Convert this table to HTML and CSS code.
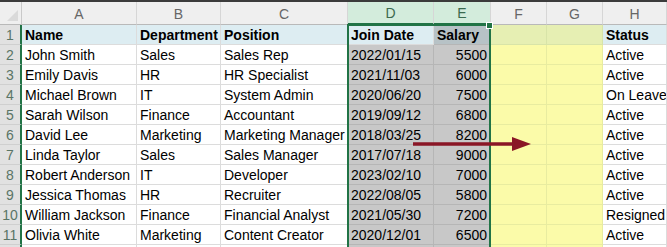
FILE: index.html
```html
<!DOCTYPE html>
<html>
<head>
<meta charset="utf-8">
<link rel="stylesheet" href="styles.css">
</head>
<body>
<div class="sheet">
  <div class="grid">
    <div class="ch corner"><span class="tri"></span></div>
    <div class="ch">A</div><div class="ch">B</div><div class="ch">C</div>
    <div class="ch sel">D</div><div class="ch sel">E</div>
    <div class="ch">F</div><div class="ch">G</div><div class="ch">H</div>

    <div class="rh">1</div>
    <div class="c hd b">Name</div><div class="c hd b">Department</div><div class="c hd b">Position</div>
    <div class="c hd b">Join Date</div><div class="c hd b shade">Salary</div>
    <div class="c yh"></div><div class="c yh"></div><div class="c hd b">Status</div>

    <div class="rh">2</div>
    <div class="c">John Smith</div><div class="c">Sales</div><div class="c">Sales Rep</div>
    <div class="c shade">2022/01/15</div><div class="c shade num">5500</div>
    <div class="c y"></div><div class="c y"></div><div class="c">Active</div>

    <div class="rh">3</div>
    <div class="c">Emily Davis</div><div class="c">HR</div><div class="c">HR Specialist</div>
    <div class="c shade">2021/11/03</div><div class="c shade num">6000</div>
    <div class="c y"></div><div class="c y"></div><div class="c">Active</div>

    <div class="rh">4</div>
    <div class="c">Michael Brown</div><div class="c">IT</div><div class="c">System Admin</div>
    <div class="c shade">2020/06/20</div><div class="c shade num">7500</div>
    <div class="c y"></div><div class="c y"></div><div class="c">On Leave</div>

    <div class="rh">5</div>
    <div class="c">Sarah Wilson</div><div class="c">Finance</div><div class="c">Accountant</div>
    <div class="c shade">2019/09/12</div><div class="c shade num">6800</div>
    <div class="c y"></div><div class="c y"></div><div class="c">Active</div>

    <div class="rh">6</div>
    <div class="c">David Lee</div><div class="c">Marketing</div><div class="c">Marketing Manager</div>
    <div class="c shade">2018/03/25</div><div class="c shade num">8200</div>
    <div class="c y"></div><div class="c y"></div><div class="c">Active</div>

    <div class="rh">7</div>
    <div class="c">Linda Taylor</div><div class="c">Sales</div><div class="c">Sales Manager</div>
    <div class="c shade">2017/07/18</div><div class="c shade num">9000</div>
    <div class="c y"></div><div class="c y"></div><div class="c">Active</div>

    <div class="rh">8</div>
    <div class="c">Robert Anderson</div><div class="c">IT</div><div class="c">Developer</div>
    <div class="c shade">2023/02/10</div><div class="c shade num">7000</div>
    <div class="c y"></div><div class="c y"></div><div class="c">Active</div>

    <div class="rh">9</div>
    <div class="c">Jessica Thomas</div><div class="c">HR</div><div class="c">Recruiter</div>
    <div class="c shade">2022/08/05</div><div class="c shade num">5800</div>
    <div class="c y"></div><div class="c y"></div><div class="c">Active</div>

    <div class="rh">10</div>
    <div class="c">William Jackson</div><div class="c">Finance</div><div class="c">Financial Analyst</div>
    <div class="c shade">2021/05/30</div><div class="c shade num">7200</div>
    <div class="c y"></div><div class="c y"></div><div class="c">Resigned</div>

    <div class="rh">11</div>
    <div class="c">Olivia White</div><div class="c">Marketing</div><div class="c">Content Creator</div>
    <div class="c shade">2020/12/01</div><div class="c shade num">6500</div>
    <div class="c y"></div><div class="c y"></div><div class="c">Active</div>

    <div class="rh"></div>
    <div class="c"></div><div class="c"></div><div class="c"></div>
    <div class="c shade"></div><div class="c shade"></div>
    <div class="c y"></div><div class="c y"></div><div class="c"></div>
  </div>
  <div class="selection"><span class="handle"></span></div>
  <svg class="arrow" width="130" height="20" viewBox="0 0 130 20">
    <line x1="0" y1="10" x2="104" y2="10" stroke="#8a1626" stroke-width="3.5"/>
    <polygon points="99,3 118,10 99,17" fill="#8a1626"/>
  </svg>
</div>
</body>
</html>
```

FILE: styles.css
```css
html, body {
  margin: 0;
  padding: 0;
  background: #ffffff;
}
.sheet {
  position: relative;
  width: 667px;
  height: 247px;
  overflow: hidden;
  border-top: 2px solid #3b3b3b;
  box-sizing: border-box;
  font-family: "Liberation Sans", Arial, sans-serif;
  font-size: 14px;
  color: #000;
}
.grid {
  display: grid;
  grid-template-columns: 22px 115px 84px 127px 86px 57px 56px 56px 64px;
  grid-template-rows: 23px repeat(12, 20px);
}
.ch {
  background: #efefef;
  color: #666;
  font-size: 14px;
  display: flex;
  align-items: center;
  justify-content: center;
  border-right: 1px solid #d6d6d6;
  border-bottom: 1px solid #b9b9b9;
  box-sizing: border-box;
  padding-top: 1px;
}
.ch.corner {
  position: relative;
  border-right: 1px solid #c9c9c9;
}
.tri {
  position: absolute;
  right: 3px;
  bottom: 3px;
  width: 0;
  height: 0;
  border-left: 11px solid transparent;
  border-bottom: 11px solid #dadada;
}
.ch.sel {
  background: #d3ecdc;
  color: #3b6a4f;
  border-bottom: 2px solid #217346;
}
.rh {
  background: #e1e1e1;
  color: #5a7566;
  display: flex;
  align-items: center;
  justify-content: center;
  border-right: 2px solid #217346;
  border-bottom: 1px solid #cfcfcf;
  box-sizing: border-box;
  font-size: 14px;
  padding-top: 1px;
}
.c {
  box-sizing: border-box;
  border-right: 1px solid #dcdcdc;
  border-bottom: 1px solid #dcdcdc;
  padding: 1px 3px 0 3px;
  line-height: 19px;
  white-space: nowrap;
  overflow: hidden;
  background: #ffffff;
}
.c.hd {
  background: #ddedf2;
}
.c.b {
  font-weight: bold;
}
.c.shade {
  background: #c8c8c8;
  border-color: #b6b6b6;
}
.c.hd.shade {
  background: #b7c2c6;
}
.c.num {
  text-align: right;
}
.c.y {
  background: #fbfba9;
  border-color: #e8eca0;
}
.c.yh {
  background: #e6efb3;
  border-color: #d8e4a8;
}
.selection {
  position: absolute;
  left: 347px;
  top: 22px;
  width: 144px;
  height: 230px;
  border: 2px solid #217346;
  box-sizing: border-box;
  pointer-events: none;
}
.handle {
  position: absolute;
  right: -4px;
  top: -4px;
  width: 5px;
  height: 5px;
  background: #217346;
  border: 1px solid #ffffff;
}
.arrow {
  position: absolute;
  left: 413px;
  top: 132px;
}
```
